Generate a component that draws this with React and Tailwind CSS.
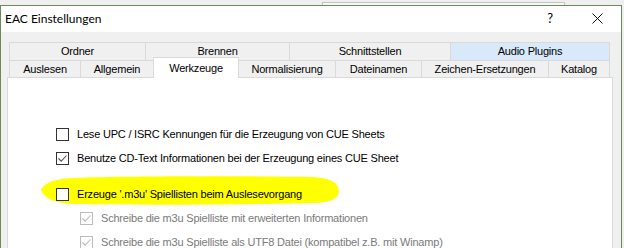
import React from 'react';

const row1 = [
  { label: 'Ordner', w: 'w-[136px]' },
  { label: 'Brennen', w: 'w-[144px]' },
  { label: 'Schnittstellen', w: 'w-[161px]' },
  { label: 'Audio Plugins', w: 'w-[160px]', hover: true },
];

const row2 = [
  { label: 'Auslesen', w: 'w-[71px]' },
  { label: 'Allgemein', w: 'w-[73px]' },
  { label: 'Werkzeuge', w: 'w-[86px]', active: true },
  { label: 'Normalisierung', w: 'w-[96px]' },
  { label: 'Dateinamen', w: 'w-[86px]' },
  { label: 'Zeichen-Ersetzungen', w: 'w-[127px]' },
  { label: 'Katalog', w: 'w-[62px]' },
];

const Check = ({ checked, disabled }) => (
  <span
    className={`flex h-[13px] w-[13px] shrink-0 items-center justify-center border bg-white ${
      disabled ? 'border-[#bcbcbc]' : 'border-[#333333]'
    }`}
  >
    {checked && (
      <svg width="11" height="11" viewBox="0 0 11 11">
        <path
          d="M1.5 5.5 L4.2 8.2 L9.5 2.5"
          fill="none"
          stroke={disabled ? '#bcbcbc' : '#555555'}
          strokeWidth="1.1"
        />
      </svg>
    )}
  </span>
);

const Option = ({ label, checked, disabled, indent }) => (
  <div className={`flex h-[24px] items-center gap-[8px] ${indent ? 'pl-[24px]' : ''}`}>
    <Check checked={checked} disabled={disabled} />
    <span className={disabled ? 'text-[#7a7a7a]' : 'text-black'}>{label}</span>
  </div>
);

export default function App() {
  return (
    <div className="h-[248px] w-[624px] overflow-hidden bg-[#efefef] font-['Liberation_Sans',Arial,sans-serif] text-[11px] tracking-[-0.2px] text-black">
      {/* background window edge */}
      <div className="flex h-[5px] items-end">
        <div className="ml-[322px] h-[3px] w-[243px] border border-b-0 border-[#c4c4c4] bg-[#f7f7f7]" />
      </div>

      <div className="w-[622px] border-x border-t border-[#6a8a5a] bg-[#f0f0f0]">
        {/* title bar */}
        <div className="flex h-[26px] items-center bg-white pb-[1px] pl-[4px] font-['Lato',sans-serif] text-[12px] tracking-normal">
          <span className="flex-1">EAC Einstellungen</span>
          <span className="mr-[39px] text-[13px]">?</span>
          <svg width="11" height="11" viewBox="0 0 11 11" className="mr-[18px]">
            <path d="M0.5 0.5 L10.5 10.5 M10.5 0.5 L0.5 10.5" stroke="#111" strokeWidth="1" />
          </svg>
        </div>

        {/* body */}
        <div className="h-[220px] pl-[6px] pt-[10px]">
          <div className="ml-[2px] flex h-[18px]">
            {row1.map((t, i) => (
              <div
                key={t.label}
                className={`${t.w} flex items-center justify-center border-t border-l border-[#d9d9d9] ${
                  i === row1.length - 1 ? 'border-r' : ''
                } ${t.hover ? 'bg-[#d8eaf9]' : 'bg-[#f0f0f0]'}`}
              >
                {t.label}
              </div>
            ))}
          </div>
          <div className="ml-[2px] flex h-[17px] items-end">
            {row2.map((t, i) =>
              t.active ? (
                <div
                  key={t.label}
                  className={`${t.w} relative z-10 mb-[-1px] flex h-[21px] items-start justify-center border-x border-t border-[#d9d9d9] bg-white pt-[2px]`}
                >
                  {t.label}
                </div>
              ) : (
                <div
                  key={t.label}
                  className={`${t.w} flex h-[17px] items-center justify-center border-t border-l border-[#d9d9d9] bg-[#f0f0f0] ${
                    i === row2.length - 1 ? 'border-r' : ''
                  } ${row2[i - 1] && row2[i - 1].active ? 'border-l-0' : ''}`}
                >
                  {t.label}
                </div>
              )
            )}
          </div>

          {/* panel */}
          <div className="relative h-[200px] w-[606px] border border-[#d9d9d9] bg-white pl-[48px] pt-[44px]">
            <svg
              className="absolute left-[32px] top-[98px]"
              width="300"
              height="30"
              viewBox="0 0 300 30"
            >
              <path
                d="M1 14 C5 6 14 3 32 2 C90 0 200 0 272 1 C291 2 299 7 299 15 C299 22 291 27 272 27 C200 29 90 29 32 28 C14 27 4 22 1 14 Z"
                fill="#ffff00"
              />
            </svg>
            <Option label="Lese UPC / ISRC Kennungen für die Erzeugung von CUE Sheets" />
            <Option label="Benutze CD-Text Informationen bei der Erzeugung eines CUE Sheet" checked />
            <div className="relative mt-[12px]">
              <Option label="Erzeuge '.m3u' Spiellisten beim Auslesevorgang" />
            </div>
            <Option label="Schreibe die m3u Spielliste mit erweiterten Informationen" checked disabled indent />
            <Option
              label="Schreibe die m3u Spielliste als UTF8 Datei (kompatibel z.B. mit Winamp)"
              checked
              disabled
              indent
            />
          </div>
        </div>
      </div>
    </div>
  );
}
